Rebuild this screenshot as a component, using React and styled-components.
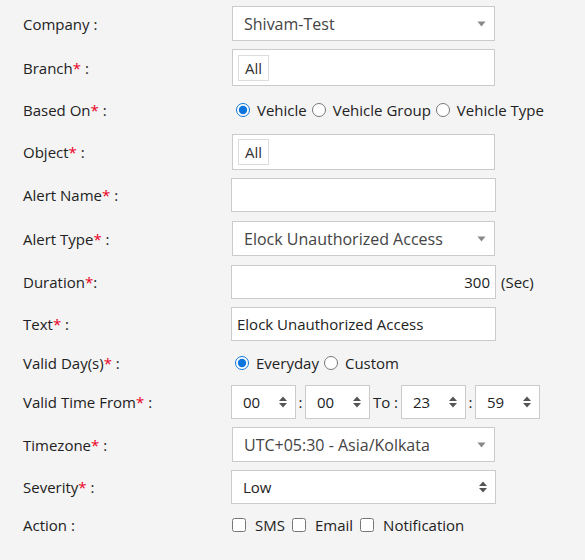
import React from "react";
import styled, { createGlobalStyle } from "styled-components";

const GlobalStyle = createGlobalStyle`
  html, body {
    margin: 0;
    padding: 0;
    background: #f4f4f4;
  }
  body {
    font-family: "Open Sans", "Noto Sans", sans-serif;
    font-size: 15px;
    color: #222;
  }
`;

const Form = styled.div`
  padding: 1px 0 0 23px;
  display: flex;
  flex-direction: column;
`;

const Row = styled.div`
  display: flex;
  align-items: center;
  height: ${props => props.h}px;
`;

const Label = styled.div`
  width: 208px;
  flex-shrink: 0;
  color: #222;
`;

const Star = styled.span`
  color: #e8001c;
`;

const Control = styled.div`
  display: flex;
  align-items: center;
`;

const SelectBox = styled.div`
  box-sizing: border-box;
  display: flex;
  align-items: center;
  justify-content: space-between;
  width: ${props => props.w || 263}px;
  height: ${props => props.h || 35}px;
  margin-left: ${props => (props.inset ? 1 : 0)}px;
  padding: 0 8px 0 11px;
  background: white;
  border: 1px solid #cbcbcb;
  color: ${props => props.color || "#444"};
  font-size: ${props => props.fs || 16}px;
`;

const TextBox = styled.div`
  box-sizing: border-box;
  display: flex;
  align-items: center;
  justify-content: ${props => (props.right ? "flex-end" : "flex-start")};
  width: ${props => props.w || 265}px;
  height: ${props => props.h || 34}px;
  margin-left: ${props => (props.inset ? 1 : 0)}px;
  padding: 0 5px;
  background: white;
  border: 1px solid #cbcbcb;
  color: #222;
`;

const Chip = styled.span`
  box-sizing: border-box;
  display: inline-flex;
  align-items: center;
  height: 26px;
  padding: 0 6px;
  border: 1px solid #dcdcdc;
  color: #333;
`;

const Suffix = styled.span`
  margin-left: 5px;
`;

const Options = styled.div`
  display: flex;
  align-items: center;
  gap: ${props => props.gap || 5}px;
  margin-left: ${props => props.ml || 0}px;
`;

const Option = styled.label`
  display: flex;
  align-items: center;
  gap: ${props => props.gap || 7}px;
  color: #222;
`;

const Radio = styled.input.attrs({ type: "radio" })`
  margin: 0;
  width: 14px;
  height: 14px;
  accent-color: #0b74de;
`;

const Check = styled.input.attrs({ type: "checkbox" })`
  margin: 0;
  width: 14px;
  height: 14px;
`;

const Sep = styled.span`
  width: ${props => props.w}px;
  text-align: center;
  color: #222;
`;

const Caret = () => (
  <svg width="9" height="6" viewBox="0 0 9 6">
    <path d="M0.5 0.5 L8.5 0.5 L4.5 5.5 Z" fill="#888" />
  </svg>
);

const Updown = () => (
  <svg width="8" height="12" viewBox="0 0 8 12">
    <path d="M0 5 L4 0.5 L8 5 Z" fill="#555" />
    <path d="M0 7 L4 11.5 L8 7 Z" fill="#555" />
  </svg>
);

const TimeSelect = ({ value }) => (
  <SelectBox w={65} h={34} color="#222" fs={15}>
    {value}
    <Updown />
  </SelectBox>
);

export default function App() {
  return (
    <>
      <GlobalStyle />
      <Form>
        <Row h={45}>
          <Label>Company :</Label>
          <SelectBox inset>
            Shivam-Test
            <Caret />
          </SelectBox>
        </Row>
        <Row h={43}>
          <Label>
            Branch<Star>*</Star> :
          </Label>
          <TextBox inset w={263} h={37}>
            <Chip>All</Chip>
          </TextBox>
        </Row>
        <Row h={41}>
          <Label>
            Based On<Star>*</Star> :
          </Label>
          <Options ml={5}>
            <Option>
              <Radio name="based" defaultChecked />
              Vehicle
            </Option>
            <Option>
              <Radio name="based" />
              Vehicle Group
            </Option>
            <Option>
              <Radio name="based" />
              Vehicle Type
            </Option>
          </Options>
        </Row>
        <Row h={43}>
          <Label>
            Object<Star>*</Star> :
          </Label>
          <TextBox inset w={263} h={36}>
            <Chip>All</Chip>
          </TextBox>
        </Row>
        <Row h={44}>
          <Label>
            Alert Name<Star>*</Star> :
          </Label>
          <TextBox />
        </Row>
        <Row h={43}>
          <Label>
            Alert Type<Star>*</Star> :
          </Label>
          <SelectBox inset>
            Elock Unauthorized Access
            <Caret />
          </SelectBox>
        </Row>
        <Row h={43}>
          <Label>
            Duration<Star>*</Star>:
          </Label>
          <Control>
            <TextBox right>300</TextBox>
            <Suffix>(Sec)</Suffix>
          </Control>
        </Row>
        <Row h={41}>
          <Label>
            Text<Star>*</Star> :
          </Label>
          <TextBox>Elock Unauthorized Access</TextBox>
        </Row>
        <Row h={38}>
          <Label>
            Valid Day(s)<Star>*</Star> :
          </Label>
          <Options ml={4}>
            <Option>
              <Radio name="days" defaultChecked />
              Everyday
            </Option>
            <Option>
              <Radio name="days" />
              Custom
            </Option>
          </Options>
        </Row>
        <Row h={40}>
          <Label>
            Valid Time From<Star>*</Star> :
          </Label>
          <Control>
            <TimeSelect value="00" />
            <Sep w={9}>:</Sep>
            <TimeSelect value="00" />
            <Sep w={31}>To :</Sep>
            <TimeSelect value="23" />
            <Sep w={9}>:</Sep>
            <TimeSelect value="59" />
          </Control>
        </Row>
        <Row h={45}>
          <Label>
            Timezone<Star>*</Star> :
          </Label>
          <SelectBox inset>
            UTC+05:30 - Asia/Kolkata
            <Caret />
          </SelectBox>
        </Row>
        <Row h={40}>
          <Label>
            Severity<Star>*</Star> :
          </Label>
          <SelectBox w={265} h={34} color="#222" fs={15}>
            Low
            <Updown />
          </SelectBox>
        </Row>
        <Row h={36}>
          <Label>Action :</Label>
          <Options ml={1} gap={7}>
            <Option gap={9}>
              <Check />
              SMS
            </Option>
            <Option gap={9}>
              <Check />
              Email
            </Option>
            <Option gap={9}>
              <Check />
              Notification
            </Option>
          </Options>
        </Row>
      </Form>
    </>
  );
}
